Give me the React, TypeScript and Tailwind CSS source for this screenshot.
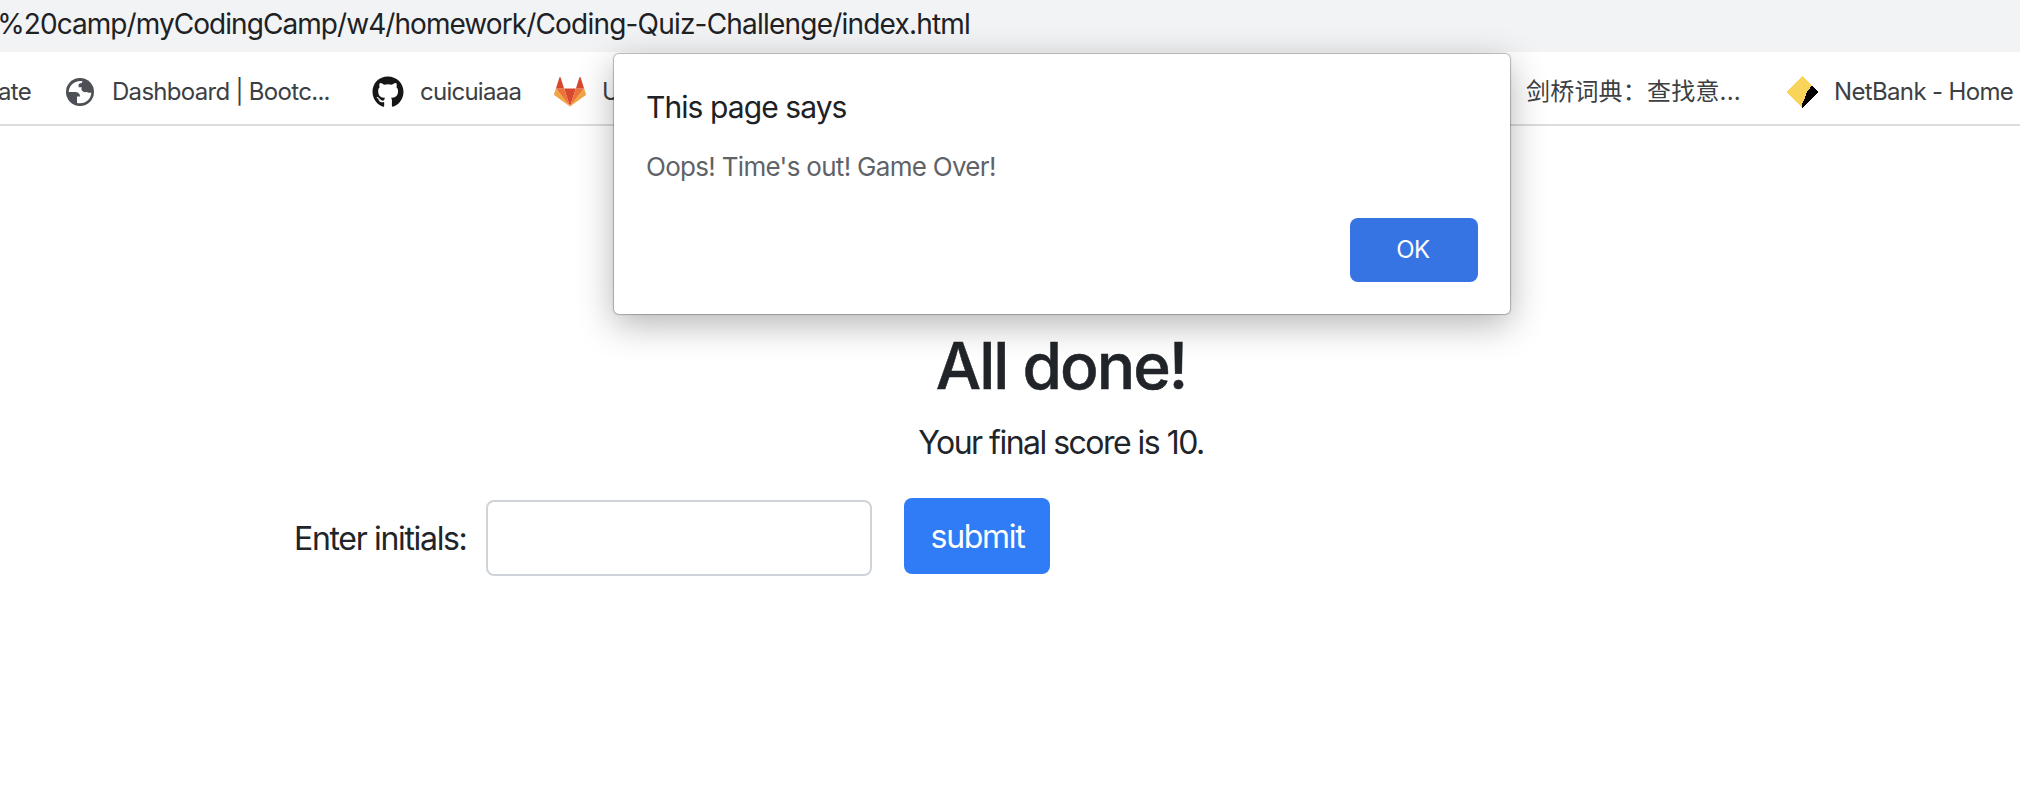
import React from "react";
import { FaGithub } from "react-icons/fa";

function Globe() {
  return (
    <svg viewBox="0 0 28 28" className="size-7 shrink-0">
      <circle cx="14" cy="14" r="14" fill="#4d5156" />
      <path
        d="M16.500 3.200C10.500 2 4.300 5.600 2.900 12.200 2.700 13.200 2.700 13.700 2.700 14H9c3.200 0 5 1.500 5 4.600h-3v2.600v3.700C18 26.800 25 22.500 25.300 14.600c-1.600.4-3.600.3-4.800-.9-1.200 1-2.600.4-3.400-.2-1.600-1-2.200-2.600-1.300-4.300h-3.200V7.300c0-1.400 1-2 2.400-2 .6 0 .8-.8 1.500-2.100Z"
        fill="#fff"
      />
    </svg>
  );
}

function GitLab() {
  return (
    <svg viewBox="0 0 32 30" className="h-[30px] w-8 shrink-0">
      <path d="M16 29.500 21.900 11.400H10.100Z" fill="#d6492f" />
      <path d="M16 29.500 10.100 11.400H1.900ZM16 29.500 21.900 11.400h8.200Z" fill="#ee7338" />
      <path d="M1.900 11.400.1 16.900a1.200 1.200 0 0 0 .4 1.400L16 29.500ZM30.100 11.400l1.800 5.500a1.200 1.200 0 0 1-.4 1.400L16 29.500Z" fill="#f0a541" />
      <path d="M1.900 11.400h8.200L6.600.6a.6.600 0 0 0-1.200 0ZM30.100 11.400h-8.200L25.400.6a.6.600 0 0 1 1.200 0Z" fill="#d6492f" />
    </svg>
  );
}

function NetBank() {
  return (
    <svg viewBox="0 0 32 32" className="size-8 shrink-0" shapeRendering="crispEdges">
      <path d="M16 0 32 16 16 32 0 16Z" fill="#f8d55a" />
      <path d="M26 10 32 16 16 32V28.500L19 22 21 16 25 10.500Z" fill="#000" />
    </svg>
  );
}

const label = "whitespace-nowrap text-2xl leading-8 text-[#3c4043]";

export default function App() {
  return (
    <div className="relative h-[798px] w-[2020px] overflow-hidden bg-white font-['Inter','Noto_Sans_CJK_SC',sans-serif]">
      <header className="h-[52px] bg-[#f1f3f4]">
        <div className="flex h-12 w-[970px] items-center justify-end whitespace-nowrap text-[28px] text-[#202124]">
          <span className="tracking-[-0.94px]">g%20camp/myCodingCamp/w4/homework</span>
          <span className="tracking-[-0.8px]">/Coding-Quiz-Challenge/index.html</span>
        </div>
      </header>

      <nav className="flex h-[74px] items-center border-b-2 border-[#dadce0] pt-2">
        <div className="flex w-[66px] shrink-0">
          <span className={`${label} -ml-0.5 tracking-[-0.7px]`}>ate</span>
        </div>
        <div className="flex w-[306px] shrink-0 items-center gap-[18px]">
          <Globe />
          <span className={`${label} tracking-[-0.7px]`}>Dashboard | Bootc...</span>
        </div>
        <div className="flex w-[182px] shrink-0 items-center gap-4">
          <FaGithub className="size-8 shrink-0 text-[#171516]" />
          <span className={`${label} tracking-[-0.75px]`}>cuicuiaaa</span>
        </div>
        <div className="flex w-[972px] shrink-0 items-center gap-4">
          <GitLab />
          <span className={label}>U</span>
        </div>
        <div className="flex w-[260px] shrink-0 items-center">
          <span className={`${label} tracking-[0.2px]`}>剑桥词典：查找意...</span>
        </div>
        <div className="flex shrink-0 items-center gap-4">
          <NetBank />
          <span className={`${label} tracking-[-0.65px]`}>NetBank - Home</span>
        </div>
      </nav>

      <main className="flex flex-col pt-[201px] text-[#212529]">
        <div className="flex flex-col items-center pl-[102px]">
          <h1 className="text-[64px] leading-[77px] font-medium tracking-[-2px] [-webkit-text-stroke:0.5px_#212529]">All done!</h1>
          <p className="mt-[15px] text-[32px] leading-12 tracking-[-1.52px]">Your final score is 10.</p>
        </div>
        <form className="mt-[31px] flex items-start pl-[294px]" onSubmit={(e) => e.preventDefault()}>
          <label htmlFor="initials" className="mt-[17px] w-48 text-[32px] leading-12 whitespace-nowrap tracking-[-1.33px]">
            Enter initials:
          </label>
          <input id="initials" className="mt-0.5 h-[76px] w-[386px] rounded-lg border-2 border-[#ced4da] bg-white px-6 text-[32px]" />
          <button className="ml-8 flex h-[76px] w-[146px] items-center justify-center rounded-lg bg-[#2f7cf6] pt-0.5 pl-px text-[32px] tracking-[-1.3px] text-white">
            submit
          </button>
        </form>
      </main>

      <div
        role="dialog"
        className="absolute top-[54px] left-[614px] flex h-[260px] w-[896px] flex-col rounded-[5px] bg-white px-8 shadow-[0_0_1px_1px_rgba(0,0,0,0.25),0_10px_36px_rgba(0,0,0,0.3)]"
      >
        <h2 className="mt-[33px] text-[30px] leading-10 tracking-[-0.92px] text-[#202124]">This page says</h2>
        <p className="mt-5 text-[26px] leading-10 tracking-[-0.7px] text-[#5f6368]">Oops! Time's out! Game Over!</p>
        <button className="mt-[31px] flex h-16 w-32 items-center justify-center self-end rounded-lg bg-[#3574e2] pr-0.5 text-2xl tracking-[-0.6px] text-white">
          OK
        </button>
      </div>
    </div>
  );
}
